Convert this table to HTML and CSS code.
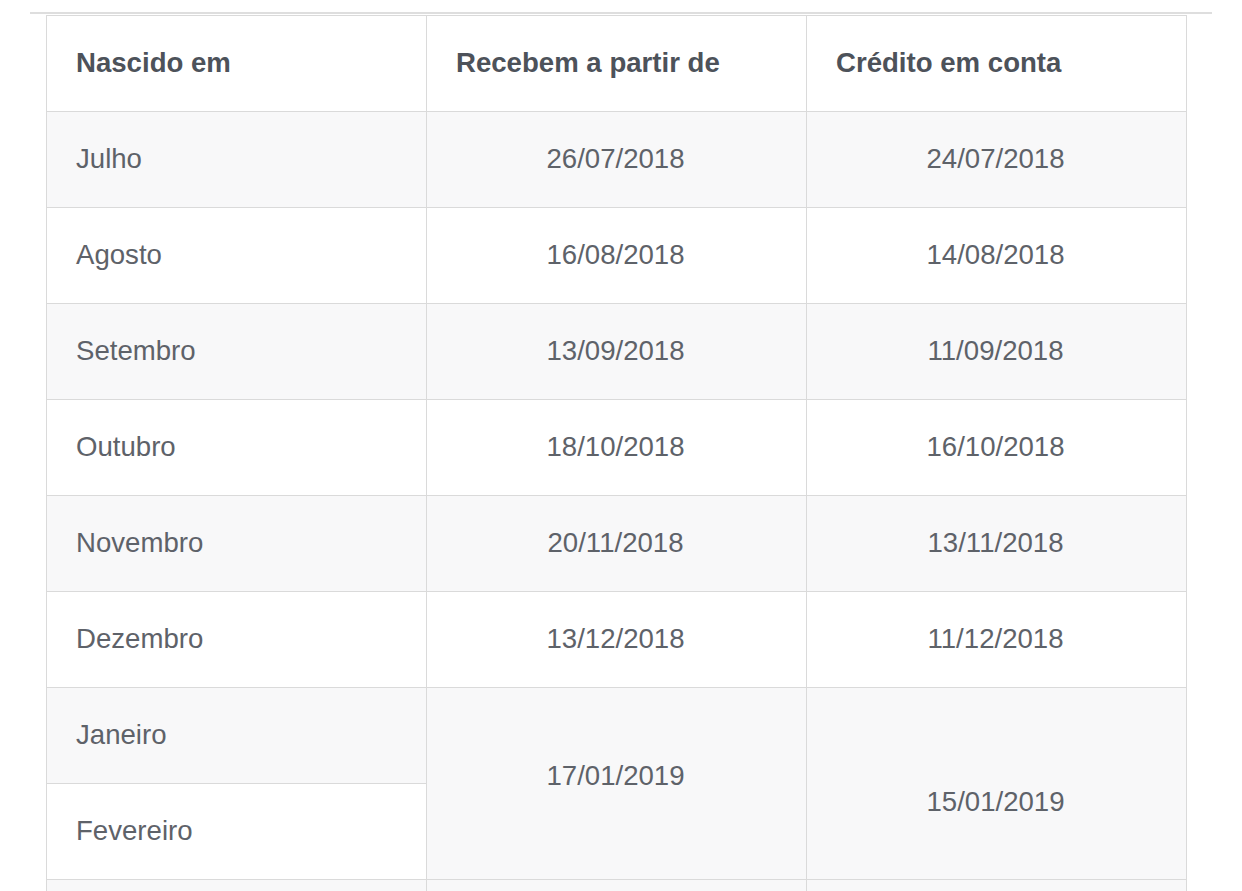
FILE: index.html
```html
<!DOCTYPE html>
<html lang="pt">
<head>
<meta charset="utf-8">
<link rel="stylesheet" href="styles.css">
</head>
<body>
<div class="page">
  <div class="rule"></div>
  <table class="calendar">
    <thead>
      <tr>
        <th>Nascido em</th>
        <th>Recebem a partir de</th>
        <th>Crédito em conta</th>
      </tr>
    </thead>
    <tbody>
      <tr class="alt"><td>Julho</td><td class="date">26/07/2018</td><td class="date">24/07/2018</td></tr>
      <tr><td>Agosto</td><td class="date">16/08/2018</td><td class="date">14/08/2018</td></tr>
      <tr class="alt"><td>Setembro</td><td class="date">13/09/2018</td><td class="date">11/09/2018</td></tr>
      <tr><td>Outubro</td><td class="date">18/10/2018</td><td class="date">16/10/2018</td></tr>
      <tr class="alt"><td>Novembro</td><td class="date">20/11/2018</td><td class="date">13/11/2018</td></tr>
      <tr><td>Dezembro</td><td class="date">13/12/2018</td><td class="date">11/12/2018</td></tr>
      <tr class="alt"><td>Janeiro</td><td class="date up" rowspan="2">17/01/2019</td><td class="date down" rowspan="2">15/01/2019</td></tr>
      <tr><td>Fevereiro</td></tr>
      <tr class="alt"><td>&nbsp;</td><td class="date">&nbsp;</td><td class="date">&nbsp;</td></tr>
    </tbody>
  </table>
</div>
</body>
</html>
```

FILE: styles.css
```css
html, body {
  margin: 0;
  padding: 0;
  background: #ffffff;
}

body {
  font-family: "Liberation Sans", Arial, sans-serif;
  overflow: hidden;
}

.page {
  padding: 12px 30px 0 30px;
}

.rule {
  width: 1182px;
  height: 2px;
  background: #dedede;
}

.calendar {
  margin-left: 16px;
  margin-top: 1px;
  width: 1141px;
  border-collapse: collapse;
  table-layout: fixed;
  font-size: 27.6px;
}

.calendar th,
.calendar td {
  border: 1px solid #dadada;
  height: 96px;
  padding: 0 29px;
  box-sizing: border-box;
  vertical-align: middle;
}

.calendar th {
  text-align: left;
  font-weight: bold;
  color: #4d525a;
  padding-bottom: 2px;
}

.calendar td {
  color: #5e6269;
  padding-bottom: 2px;
}

.calendar tr.alt td {
  background: #f8f8f9;
}

.calendar td.date {
  text-align: center;
  padding: 0 12px 2px 10px;
}

.calendar td.up {
  padding-bottom: 16px;
}

.calendar td.down {
  padding-top: 38px;
}
```
